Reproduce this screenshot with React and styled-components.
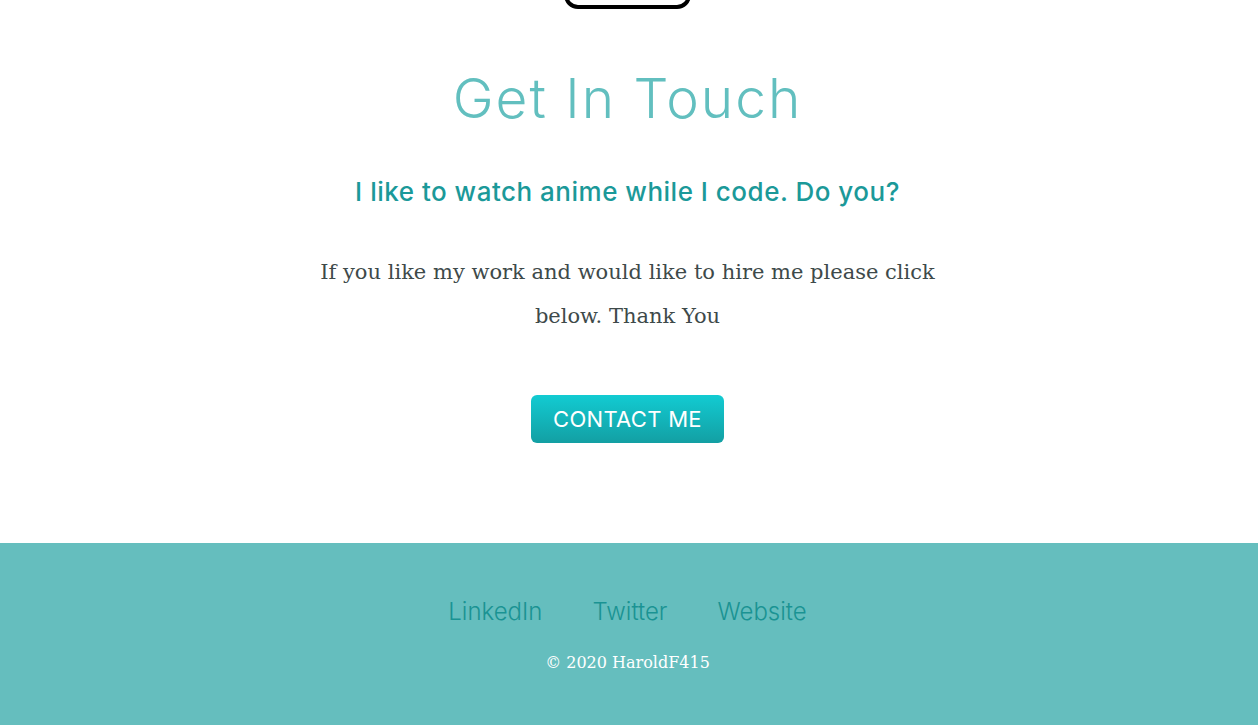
import React from 'react';
import styled, { createGlobalStyle } from 'styled-components';

const GlobalStyle = createGlobalStyle`
  html, body {
    margin: 0;
    padding: 0;
    background: #ffffff;
  }
  body {
    font-family: "DejaVu Serif", "Liberation Serif", serif;
  }
`;

const Page = styled.div`
  display: flex;
  flex-direction: column;
  min-height: 725px;
`;

const PrevSection = styled.div`
  height: 9px;
  overflow: hidden;
  display: flex;
  justify-content: center;
  align-items: flex-end;
  padding-right: 4px;
`;

const OutlineButton = styled.div`
  width: 119px;
  height: 50px;
  border: 4px solid #000;
  border-radius: 14px;
  flex-shrink: 0;
`;

const ContactSection = styled.section`
  display: flex;
  flex-direction: column;
  align-items: center;
  padding: 55px 23px 100px 20px;
  text-align: center;
`;

const Heading = styled.h1`
  margin: 0;
  font-family: Inter, "Open Sans", sans-serif;
  font-weight: 300;
  font-size: 55px;
  line-height: 68px;
  color: #62bfbf;
  letter-spacing: 2px;
`;

const SubHeading = styled.h3`
  margin: 42px 0 0;
  font-family: Inter, "Open Sans", sans-serif;
  font-weight: 500;
  font-size: 26px;
  line-height: 36px;
  color: #1b9999;
  letter-spacing: 0.5px;
`;

const Text = styled.p`
  margin: 40px 0 0;
  max-width: 640px;
  font-family: "DejaVu Serif", "Liberation Serif", serif;
  font-size: 21px;
  line-height: 44px;
  color: #3e4a4a;
`;

const ContactButton = styled.a`
  margin-top: 57px;
  width: 193px;
  height: 48px;
  display: flex;
  align-items: center;
  justify-content: center;
  border-radius: 6px;
  background: linear-gradient(to bottom, #12cbd2, #139fa3);
  color: #ffffff;
  font-family: Inter, "Open Sans", sans-serif;
  font-size: 22px;
  font-weight: 400;
  letter-spacing: 0.3px;
  text-decoration: none;
  text-transform: uppercase;
`;

const Footer = styled.footer`
  background: #65bebe;
  display: flex;
  flex-direction: column;
  align-items: center;
  padding: 54px 3px 50px 0;
  flex: 1;
`;

const Links = styled.nav`
  display: flex;
  gap: 50px;
`;

const FooterLink = styled.a`
  font-family: Inter, "Open Sans", sans-serif;
  font-weight: 300;
  font-size: 24px;
  line-height: 30px;
  color: #1a9393;
  text-decoration: none;
`;

const Copyright = styled.p`
  margin: 24px 0 0;
  font-family: "DejaVu Serif", "Liberation Serif", serif;
  font-size: 16px;
  line-height: 24px;
  color: #ffffff;
`;

export default function App() {
  return (
    <Page>
      <GlobalStyle />
      <PrevSection>
        <OutlineButton />
      </PrevSection>
      <ContactSection>
        <Heading>Get In Touch</Heading>
        <SubHeading>I like to watch anime while I code. Do you?</SubHeading>
        <Text>
          If you like my work and would like to hire me please click below. Thank You
        </Text>
        <ContactButton href="#">Contact Me</ContactButton>
      </ContactSection>
      <Footer>
        <Links>
          <FooterLink href="#">LinkedIn</FooterLink>
          <FooterLink href="#">Twitter</FooterLink>
          <FooterLink href="#">Website</FooterLink>
        </Links>
        <Copyright>© 2020 HaroldF415</Copyright>
      </Footer>
    </Page>
  );
}
